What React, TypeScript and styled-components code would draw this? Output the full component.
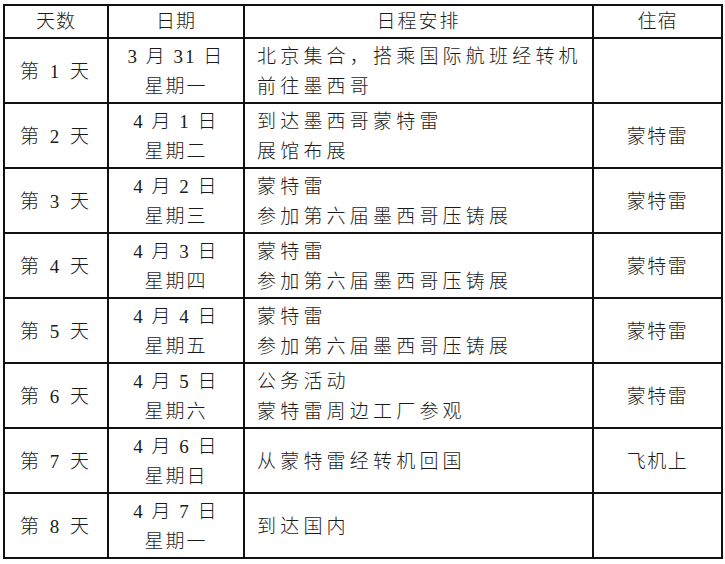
import React from 'react';
import styled, { createGlobalStyle } from 'styled-components';

const GlobalStyle = createGlobalStyle`
  html, body {
    margin: 0;
    padding: 0;
    background: #fff;
  }
  body {
    font-family: "Liberation Serif", "Noto Sans CJK SC", serif;
    color: #1a1a1a;
  }
`;

const Page = styled.div`
  padding: 4px 0 0 3px;
`;

const Table = styled.table`
  border-collapse: collapse;
  table-layout: fixed;
  width: 718px;
  font-size: 19px;
  font-weight: 300;
`;

const HeadCell = styled.th<{ $spacing?: number }>`
  height: 31px;
  padding: 0;
  border: 2px solid #111;
  font-weight: 300;
  text-align: center;
  vertical-align: middle;
  letter-spacing: ${(p) => p.$spacing ?? 0}px;
  line-height: 30px;
`;

const Cell = styled.td<{ $align?: 'left' | 'center'; $spacing?: number }>`
  height: 60px;
  padding: ${(p) => (p.$align === 'left' ? '3px 0 0 12px' : '3px 0 0 0')};
  border: 2px solid #111;
  text-align: ${(p) => p.$align ?? 'center'};
  vertical-align: middle;
  letter-spacing: ${(p) => p.$spacing ?? 0}px;
  line-height: 30px;
  white-space: nowrap;
`;

type Row = {
  day: string;
  date: string;
  week: string;
  plan: string[];
  stay: string;
};

const rows: Row[] = [
  { day: '第 1 天', date: '3 月 31 日', week: '星期一', plan: ['北京集合，搭乘国际航班经转机', '前往墨西哥'], stay: '' },
  { day: '第 2 天', date: '4 月 1 日', week: '星期二', plan: ['到达墨西哥蒙特雷', '展馆布展'], stay: '蒙特雷' },
  { day: '第 3 天', date: '4 月 2 日', week: '星期三', plan: ['蒙特雷', '参加第六届墨西哥压铸展'], stay: '蒙特雷' },
  { day: '第 4 天', date: '4 月 3 日', week: '星期四', plan: ['蒙特雷', '参加第六届墨西哥压铸展'], stay: '蒙特雷' },
  { day: '第 5 天', date: '4 月 4 日', week: '星期五', plan: ['蒙特雷', '参加第六届墨西哥压铸展'], stay: '蒙特雷' },
  { day: '第 6 天', date: '4 月 5 日', week: '星期六', plan: ['公务活动', '蒙特雷周边工厂参观'], stay: '蒙特雷' },
  { day: '第 7 天', date: '4 月 6 日', week: '星期日', plan: ['从蒙特雷经转机回国'], stay: '飞机上' },
  { day: '第 8 天', date: '4 月 7 日', week: '星期一', plan: ['到达国内'], stay: '' },
];

const Line = styled.div``;

export default function App() {
  return (
    <Page>
      <GlobalStyle />
      <Table>
        <colgroup>
          <col style={{ width: 104 }} />
          <col style={{ width: 136 }} />
          <col style={{ width: 349 }} />
          <col style={{ width: 129 }} />
        </colgroup>
        <thead>
          <tr>
            <HeadCell $spacing={1}>天数</HeadCell>
            <HeadCell $spacing={1}>日期</HeadCell>
            <HeadCell $spacing={2}>日程安排</HeadCell>
            <HeadCell $spacing={1}>住宿</HeadCell>
          </tr>
        </thead>
        <tbody>
          {rows.map((r) => (
            <tr key={r.day}>
              <Cell $spacing={3}>{r.day}</Cell>
              <Cell $spacing={2}>
                <Line>{r.date}</Line>
                <Line>{r.week}</Line>
              </Cell>
              <Cell $align="left" $spacing={4.2}>
                {r.plan.map((p) => (
                  <Line key={p}>{p}</Line>
                ))}
              </Cell>
              <Cell $spacing={1.5}>{r.stay}</Cell>
            </tr>
          ))}
        </tbody>
      </Table>
    </Page>
  );
}
